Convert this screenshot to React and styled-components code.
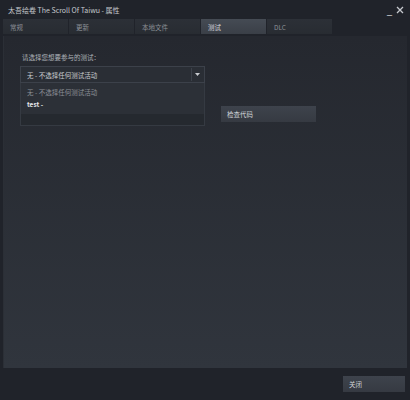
import React from "react";
import styled, { createGlobalStyle } from "styled-components";

const Global = createGlobalStyle`
  html, body {
    margin: 0;
    padding: 0;
    background: #1e2127;
  }
  body {
    font-family: "Noto Sans CJK SC", "Liberation Sans", sans-serif;
  }
`;

const Window = styled.div`
  width: 410px;
  height: 400px;
  box-sizing: border-box;
  background: #20232a;
  display: flex;
  flex-direction: column;
  color: #b8bcc2;
`;

const TitleBar = styled.div`
  height: 19px;
  display: flex;
  align-items: center;
  justify-content: space-between;
  padding: 0 6px 0 8px;
  font-size: 7px;
  color: #c6c9ce;
`;

const WinControls = styled.div`
  display: flex;
  align-items: center;
  gap: 4px;
  color: #c6c9ce;
  font-family: "DejaVu Sans", sans-serif;
  font-size: 10px;
  line-height: 1;
`;

const Tabs = styled.div`
  display: flex;
  padding: 0 3px;
  height: 15px;
`;

const Tab = styled.div`
  width: 65px;
  margin-right: 1px;
  box-sizing: border-box;
  padding-left: 7px;
  display: flex;
  align-items: center;
  font-size: 6.5px;
  color: ${(p) => (p.$active ? "#d6d9dd" : "#8a8f96")};
  background: ${(p) =>
    p.$active
      ? "linear-gradient(#454b54, #3a3f47)"
      : "linear-gradient(#2c3037, #282c32)"};
`;

const Panel = styled.div`
  margin: 2px 3px 0;
  height: 332px;
  background: linear-gradient(#25282f, #30353d);
  box-shadow: inset 1px 0 0 #2b2f36;
  padding: 16px 0 0 17px;
  box-sizing: border-box;
  display: flex;
  gap: 16px;
`;

const Field = styled.div`
  width: 185px;
  display: flex;
  flex-direction: column;
`;

const Label = styled.div`
  font-size: 6.5px;
  color: #b0b4ba;
  padding-left: 2px;
  margin-bottom: 4px;
`;

const Select = styled.div`
  height: 15px;
  border: 1px solid #3c414a;
  background: #2a2e35;
  display: flex;
  align-items: center;
  font-size: 6.5px;
  color: #c9ccd0;
  padding-left: 6px;
  position: relative;
`;

const Arrow = styled.div`
  position: absolute;
  right: 1px;
  top: 1px;
  bottom: 1px;
  width: 11px;
  border-left: 1px solid #3c414a;
  display: flex;
  align-items: center;
  justify-content: center;
`;

const List = styled.div`
  border: 1px solid #353a42;
  border-top: none;
  background: #2c3037;
  height: 42px;
  display: flex;
  flex-direction: column;
`;

const Option = styled.div`
  height: 12px;
  display: flex;
  align-items: center;
  padding-left: 6px;
  font-size: 6.5px;
  font-weight: ${(p) => (p.$bold ? 700 : 400)};
  color: ${(p) => (p.$bold ? "#e6e8eb" : "#8c9198")};
  &:first-child {
    margin-top: 3px;
  }
`;

const ListTail = styled.div`
  margin-top: auto;
  height: 11px;
  background: #25292f;
`;

const Button = styled.div`
  width: ${(p) => p.$w}px;
  height: 16px;
  box-sizing: border-box;
  padding-left: 6px;
  display: flex;
  align-items: center;
  font-size: 6.5px;
  color: #d0d3d7;
  background: linear-gradient(#3e434c, #363a42);
`;

const CheckCol = styled.div`
  padding-top: 54px;
`;

const Footer = styled.div`
  flex: 1;
  display: flex;
  justify-content: flex-end;
  align-items: center;
  padding-right: 5px;
`;

const App = () => (
  <>
    <Global />
    <Window>
      <TitleBar>
        <span>太吾绘卷 The Scroll Of Taiwu - 属性</span>
        <WinControls>
          <span>_</span>
          <svg width="8" height="8" viewBox="0 0 8 8">
            <path d="M1 1L7 7M7 1L1 7" stroke="#c6c9ce" strokeWidth="1.3" />
          </svg>
        </WinControls>
      </TitleBar>
      <Tabs>
        <Tab>常规</Tab>
        <Tab>更新</Tab>
        <Tab>本地文件</Tab>
        <Tab $active>测试</Tab>
        <Tab>DLC</Tab>
      </Tabs>
      <Panel>
        <Field>
          <Label>请选择您想要参与的测试：</Label>
          <Select>
            无 - 不选择任何测试活动
            <Arrow>
              <svg width="5" height="3" viewBox="0 0 5 3">
                <path d="M0 0H5L2.5 3Z" fill="#c9ccd0" />
              </svg>
            </Arrow>
          </Select>
          <List>
            <Option>无 - 不选择任何测试活动</Option>
            <Option $bold>test -</Option>
            <ListTail />
          </List>
        </Field>
        <CheckCol>
          <Button $w={95}>检查代码</Button>
        </CheckCol>
      </Panel>
      <Footer>
        <Button $w={62}>关闭</Button>
      </Footer>
    </Window>
  </>
);

export default App;
